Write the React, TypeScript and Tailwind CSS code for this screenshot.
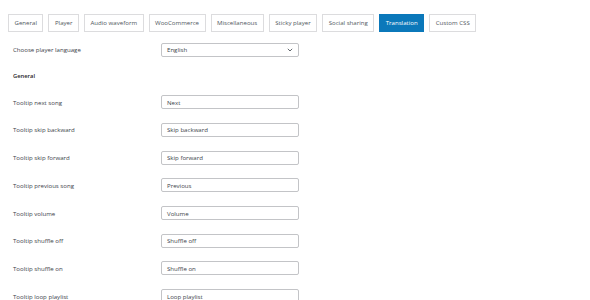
const tabs = [
  'General',
  'Player',
  'Audio waveform',
  'WooCommerce',
  'Miscellaneous',
  'Sticky player',
  'Social sharing',
  'Translation',
  'Custom CSS',
];

const fields: [string, string][] = [
  ['Tooltip next song', 'Next'],
  ['Tooltip skip backward', 'Skip backward'],
  ['Tooltip skip forward', 'Skip forward'],
  ['Tooltip previous song', 'Previous'],
  ['Tooltip volume', 'Volume'],
  ['Tooltip shuffle off', 'Shuffle off'],
  ['Tooltip shuffle on', 'Shuffle on'],
  ['Tooltip loop playlist', 'Loop playlist'],
];

export default function App() {
  return (
    <div
      className="w-[590px] h-[300px] overflow-hidden bg-white text-[#3c434a] text-[6.1px]"
      style={{ fontFamily: '"Open Sans", "Noto Sans", sans-serif' }}
    >
      {/* Tabs */}
      <div className="flex gap-[5px] pl-[8px] pt-[14px]">
        {tabs.map((t) => (
          <div
            key={t}
            className={
              t === 'Translation'
                ? 'h-[18px] px-[5.5px] flex items-center border border-[#0b78ba] bg-[#0b78ba] text-white'
                : 'h-[18px] px-[5.5px] flex items-center border border-[#dcdcde] bg-white text-[#50575e]'
            }
          >
            {t}
          </div>
        ))}
      </div>

      {/* Form */}
      <div className="pl-[13px] mt-[4px]">
        <div className="h-[28px] flex items-center">
          <div className="w-[148px]">Choose player language</div>
          <div className="w-[138px] h-[14px] border border-[#c3c4c7] rounded-[2px] flex items-center justify-between px-[5px]">
            <span>English</span>
            <svg width="6" height="4" viewBox="0 0 6 4" fill="none">
              <path d="M0.8 0.8 L3 3 L5.2 0.8" stroke="#50575e" strokeWidth="0.9" />
            </svg>
          </div>
        </div>
        <div className="h-[24.5px] flex items-center font-semibold text-[#1d2327] text-[5.8px]">General</div>
        {fields.map(([label, value]) => (
          <div key={label} className="h-[27.7px] flex items-center">
            <div className="w-[148px]">{label}</div>
            <div className="w-[138px] h-[14px] border border-[#c3c4c7] rounded-[2px] flex items-center px-[5px]">
              {value}
            </div>
          </div>
        ))}
      </div>
    </div>
  );
}
